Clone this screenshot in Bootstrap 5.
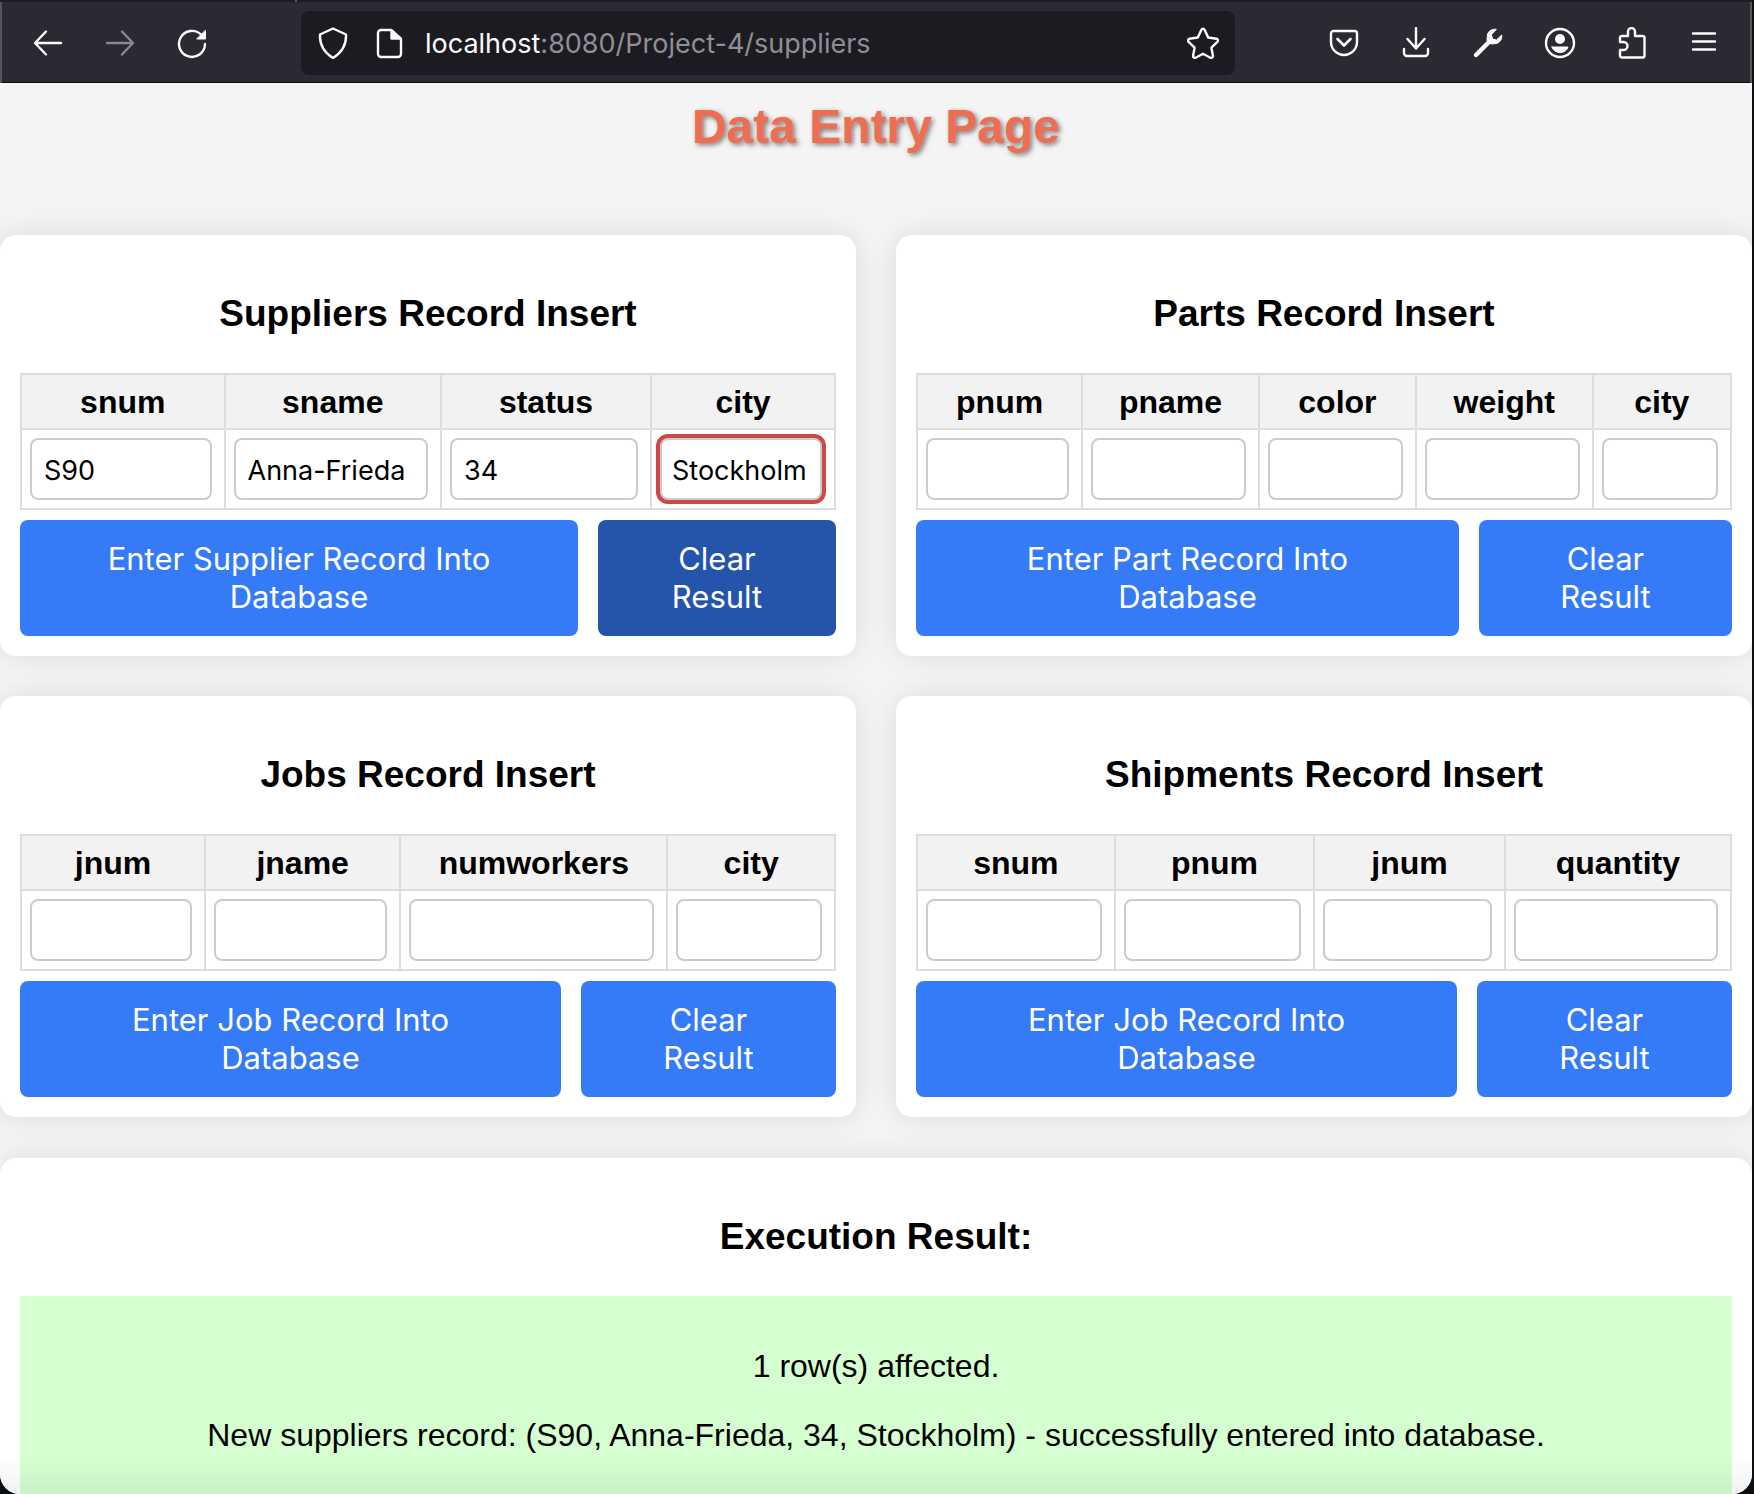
<!DOCTYPE html>
<html lang="en">
<head>
<meta charset="utf-8">
<meta name="viewport" content="width=device-width, initial-scale=1">
<title>Data Entry Page</title>
<link href="https://cdn.jsdelivr.net/npm/bootstrap@5.3.0/dist/css/bootstrap.min.css" rel="stylesheet">
<style>
  body { background: #0b0f12; color: #000; font-family: "Liberation Sans", Arial, sans-serif; font-size: 32px; line-height: 37px; }
  .window-frame { margin-right: 2px; border-radius: 0 0 20px 20px; background: #f4f4f4; }
  .window-frame::after { content: ""; position: absolute; inset: auto 0 0 0; height: 40px; pointer-events: none; background: linear-gradient(transparent, rgba(0,0,0,.05)); }

  /* browser chrome */
  .tab-edge { height: 2px; background: #1c1b22; }
  .tab-edge span { width: 297px; border-right: 2px solid #5b5b66; }
  .toolbar { height: 81px; background: #2b2a33; border: 0 solid #55545c; border-width: 0 2px; box-shadow: inset 0 -1px #0c0c0d; padding: 0 30px; color: #fbfbfe; }
  .tools { gap: 40px; }
  .tool { width: 32px; height: 32px; padding: 0; border: 0; background: none; color: inherit; display: block; line-height: 0; }
  .tool:disabled { opacity: .45; }
  .tool svg, .address svg { width: 32px; height: 32px; fill: none; stroke: currentColor; stroke-width: 2.4; stroke-linecap: round; stroke-linejoin: round; }
  .address { height: 64px; margin: 0 93px; padding: 0 16px; gap: 20px; background: #1c1b22; border-radius: 8px; font-family: Inter, sans-serif; font-size: 27px; }
  .address-text { padding-top: 2px; }
  .address-path { color: #8f8f96; }

  /* page */
  .page-title { font-size: 48px; line-height: 55px; font-weight: 700; color: #ed6e52; margin: 16px 0 81px; text-shadow: 2px 2px 5px rgba(0,0,0,.5); }
  .forms { gap: 40px; display: grid; grid-template-columns: 1fr 1fr; }
  .panel { background: #fff; border-radius: 16px; padding: 20px; box-shadow: 0 0 30px rgba(0,0,0,.1); }
  .panel-title { font-size: 37px; line-height: 44px; font-weight: 700; margin: 37px 0; }
  .entry { width: 100%; table-layout: fixed; border-collapse: collapse; margin-bottom: 10px; }
  .entry th, .entry td { border: 2px solid #ddd; padding: 8px; }
  .entry th { background: #f2f2f2; text-align: center; padding: 9px 8px 7px; }
  .entry input { display: block; width: calc(100% - 4px); height: 62px; padding: 2px 12px 0; border: 2px solid #ccc; border-radius: 8px; background: #fff; color: #000; font-family: Inter, sans-serif; font-size: 27px; outline: 0; }
  .entry input.current { box-shadow: 0 0 0 4px #d04845; padding: 2px 10px 0; }
  .actions { display: grid; gap: 20px; grid-template-columns: 541fr 255fr; }
  .action { background: #357af6; color: #fff; border: 0; border-radius: 8px; padding: 20px 60px; font-family: Inter, sans-serif; font-size: 31px; line-height: 38px; }
  .action:hover, .action.pressed { background: #2455ab; }

  #suppliers .actions { grid-template-columns: 558fr 238fr; }
  #parts .actions { grid-template-columns: 543fr 253fr; }
  #suppliers th:nth-child(1) { width: 25%; }
  #suppliers th:nth-child(2) { width: 26.6%; }
  #suppliers th:nth-child(3) { width: 25.8%; }
  #parts th:nth-child(1) { width: 20.3%; }
  #parts th:nth-child(2), #parts th:nth-child(4) { width: 21.7%; }
  #parts th:nth-child(3) { width: 19.3%; }
  #jobs th:nth-child(1) { width: 22.6%; }
  #jobs th:nth-child(2) { width: 24%; }
  #jobs th:nth-child(3) { width: 32.8%; }
  #shipments th:nth-child(1) { width: 24.3%; }
  #shipments th:nth-child(2) { width: 24.5%; }
  #shipments th:nth-child(3) { width: 23.4%; }

  .result-panel { margin-top: 41px; }
  .result-box { background: #d6ffd1; padding: 52px 20px 20px; }
  .result-box p { margin: 0 0 32px; }
</style>
<script src="https://cdn.jsdelivr.net/npm/bootstrap@5.3.0/dist/js/bootstrap.bundle.min.js"></script>
</head>
<body>
<div class="window-frame vh-100 overflow-hidden position-relative d-flex flex-column">
  <header class="flex-shrink-0">
    <div class="tab-edge d-flex"><span></span></div>
    <nav class="toolbar d-flex align-items-center" aria-label="Browser">
      <div class="tools d-flex">
        <button class="tool" type="button" aria-label="Back"><svg viewBox="0 0 32 32"><path d="M29 16H3.500M14 4.500 3 16l11 11.500"/></svg></button>
        <button class="tool" type="button" aria-label="Forward" disabled><svg viewBox="0 0 32 32"><path d="M3 16h25.500M18 4.500 29 16 18 27.500"/></svg></button>
        <button class="tool" type="button" aria-label="Reload"><svg viewBox="0 0 32 32"><path d="M29 17A13 13 0 1 1 25 7.500"/><path d="M29.500 3.500v8.500h-8.500z" fill="currentColor" stroke-width="1"/></svg></button>
      </div>
      <div class="address d-flex align-items-center flex-grow-1">
        <svg class="me-1" viewBox="0 0 32 32" aria-hidden="true"><path d="M16 1.500 29 7.500c.5 10-4 18-13 23.500C7 25.500 2.500 17.500 3 7.500z"/></svg>
        <svg viewBox="0 0 32 32" aria-hidden="true"><path d="M18 3H8a3 3 0 0 0-3 3v21a3 3 0 0 0 3 3h17a3 3 0 0 0 3-3V12z"/><path d="M18.500 3.500v8h9z" fill="currentColor"/></svg>
        <div class="address-text flex-grow-1 text-nowrap" role="textbox" aria-label="Address">localhost<span class="address-path">:8080/Project-4/suppliers</span></div>
        <button class="tool" type="button" aria-label="Bookmark this page"><svg viewBox="0 0 32 32"><path d="M14.400 2.800a1.800 1.800 0 0 1 3.200 0l3.600 7.700 8.200 1.200a1.800 1.800 0 0 1 1 3.100l-6 5.900 1.500 8.100a1.800 1.800 0 0 1-2.600 1.900L16 26.800l-7.300 3.900a1.800 1.800 0 0 1-2.600-1.900l1.500-8.100-6-5.900a1.800 1.800 0 0 1 1-3.100l8.200-1.200z"/></svg></button>
      </div>
      <div class="tools d-flex">
        <button class="tool" type="button" aria-label="Pocket"><svg viewBox="0 0 32 32"><path d="M5.500 4h21A2.500 2.500 0 0 1 29 6.500V15a13 13 0 0 1-26 0V6.500A2.500 2.500 0 0 1 5.500 4z"/><path d="m9.500 12 6.500 6.500 6.500-6.500" stroke-width="2.600"/></svg></button>
        <button class="tool" type="button" aria-label="Downloads"><svg viewBox="0 0 32 32"><path d="M16 0v21M7.500 12l8.500 9.500 8.500-9.500M4 22v4a3 3 0 0 0 3 3h18a3 3 0 0 0 3-3v-4"/></svg></button>
        <button class="tool" type="button" aria-label="Tools"><svg viewBox="0 0 32 32"><path d="M4 28 17 15" stroke-width="4.400"/><path d="M24 2.300c-5-.8-9 3-8.700 7.300l-.3 3.800 3.600 3.600 3.800-.3c4.300.3 8-3.700 7.300-8.700l-5.200 5-4-1-1-4z" fill="currentColor" stroke-width="1"/></svg></button>
        <button class="tool" type="button" aria-label="Account"><svg viewBox="0 0 32 32"><circle cx="16" cy="16" r="14"/><circle cx="16" cy="12" r="5" fill="currentColor" stroke="none"/><path d="M8 20h16c-1 3.500-4 5.500-8 5.500S9 23.500 8 20z" fill="currentColor" stroke-width="1"/></svg></button>
        <button class="tool" type="button" aria-label="Extensions"><svg viewBox="0 0 32 32"><path d="M4 15V11a2 2 0 0 1 2-2h6V4.500a3.500 3.500 0 0 1 7 0V9h7.500a2 2 0 0 1 2 2v17.500a2 2 0 0 1-2 2H6a2 2 0 0 1-2-2V23h3.500a4 4 0 0 0 0-8z"/></svg></button>
        <button class="tool" type="button" aria-label="Menu"><svg viewBox="0 0 32 32"><path d="M5 6.500h22M5 14.500h22M5 22.500h22"/></svg></button>
      </div>
    </nav>
  </header>

  <main class="flex-grow-1 overflow-hidden text-center">
    <h1 class="page-title">Data Entry Page</h1>
    <div class="forms">
      <form class="panel" id="suppliers">
        <h2 class="panel-title">Suppliers Record Insert</h2>
        <table class="entry">
          <thead><tr><th scope="col">snum</th><th scope="col">sname</th><th scope="col">status</th><th scope="col">city</th></tr></thead>
          <tbody><tr>
            <td><input type="text" aria-label="snum" value="S90"></td>
            <td><input type="text" aria-label="sname" value="Anna-Frieda"></td>
            <td><input type="text" aria-label="status" value="34"></td>
            <td><input type="text" class="current" aria-label="city" value="Stockholm"></td>
          </tr></tbody>
        </table>
        <div class="actions">
          <button class="action" type="button">Enter Supplier Record Into Database</button>
          <button class="action pressed" type="button">Clear Result</button>
        </div>
      </form>

      <form class="panel" id="parts">
        <h2 class="panel-title">Parts Record Insert</h2>
        <table class="entry">
          <thead><tr><th scope="col">pnum</th><th scope="col">pname</th><th scope="col">color</th><th scope="col">weight</th><th scope="col">city</th></tr></thead>
          <tbody><tr>
            <td><input type="text" aria-label="pnum"></td>
            <td><input type="text" aria-label="pname"></td>
            <td><input type="text" aria-label="color"></td>
            <td><input type="text" aria-label="weight"></td>
            <td><input type="text" aria-label="city"></td>
          </tr></tbody>
        </table>
        <div class="actions">
          <button class="action" type="button">Enter Part Record Into Database</button>
          <button class="action" type="button">Clear Result</button>
        </div>
      </form>

      <form class="panel" id="jobs">
        <h2 class="panel-title">Jobs Record Insert</h2>
        <table class="entry">
          <thead><tr><th scope="col">jnum</th><th scope="col">jname</th><th scope="col">numworkers</th><th scope="col">city</th></tr></thead>
          <tbody><tr>
            <td><input type="text" aria-label="jnum"></td>
            <td><input type="text" aria-label="jname"></td>
            <td><input type="text" aria-label="numworkers"></td>
            <td><input type="text" aria-label="city"></td>
          </tr></tbody>
        </table>
        <div class="actions">
          <button class="action" type="button">Enter Job Record Into Database</button>
          <button class="action" type="button">Clear Result</button>
        </div>
      </form>

      <form class="panel" id="shipments">
        <h2 class="panel-title">Shipments Record Insert</h2>
        <table class="entry">
          <thead><tr><th scope="col">snum</th><th scope="col">pnum</th><th scope="col">jnum</th><th scope="col">quantity</th></tr></thead>
          <tbody><tr>
            <td><input type="text" aria-label="snum"></td>
            <td><input type="text" aria-label="pnum"></td>
            <td><input type="text" aria-label="jnum"></td>
            <td><input type="text" aria-label="quantity"></td>
          </tr></tbody>
        </table>
        <div class="actions">
          <button class="action" type="button">Enter Job Record Into Database</button>
          <button class="action" type="button">Clear Result</button>
        </div>
      </form>
    </div>

    <section class="panel result-panel">
      <h2 class="panel-title">Execution Result:</h2>
      <div class="result-box">
        <p>1 row(s) affected.</p>
        <p>New suppliers record: (S90, Anna-Frieda, 34, Stockholm) - successfully entered into database.</p>
      </div>
    </section>
  </main>
</div>
</body>
</html>
